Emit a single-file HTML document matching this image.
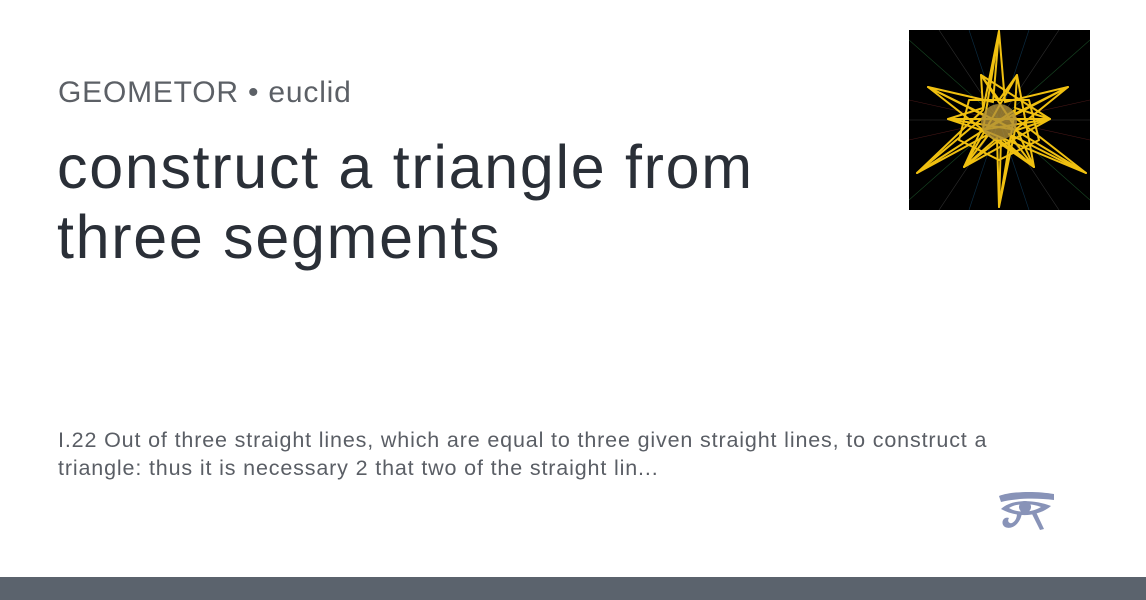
<!DOCTYPE html>
<html><head><meta charset="utf-8"><style>
body{margin:0;width:1146px;height:600px;background:#fff;position:relative;overflow:hidden;font-family:"Liberation Sans",Roboto,sans-serif}
.site{position:absolute;left:58px;top:76px;font-size:30px;color:#5c6066;letter-spacing:0.8px}
h1{position:absolute;left:57px;top:132px;margin:0;font-weight:400;font-size:61px;line-height:70px;color:#2a2f37;letter-spacing:1.7px;white-space:nowrap}
.desc{position:absolute;left:58px;top:426px;font-size:21.5px;line-height:28px;color:#5a5e65;width:945px;letter-spacing:0.85px}
.bar{position:absolute;left:0;top:577px;width:1146px;height:23px;background:#5b636d}
</style></head><body>
<div class="site">GEOMETOR • euclid</div>
<h1>construct a triangle from<br>three segments</h1>
<div class="desc">I.22 Out of three straight lines, which are equal to three given straight lines, to construct a triangle: thus it is necessary 2 that two of the straight lin...</div>
<svg style="position:absolute;left:909px;top:30px" width="181" height="180" viewBox="0 0 181 180">
<rect width="181" height="180" fill="#000"/>
<g stroke-width="0.6" opacity="0.7">
<line x1="0" y1="10" x2="181" y2="170" stroke="#263"/><line x1="181" y1="10" x2="0" y2="170" stroke="#263"/>
<line x1="30" y1="0" x2="150" y2="180" stroke="#444"/><line x1="150" y1="0" x2="30" y2="180" stroke="#444"/>
<line x1="0" y1="70" x2="181" y2="110" stroke="#622"/><line x1="0" y1="110" x2="181" y2="70" stroke="#622"/>
<line x1="0" y1="90" x2="181" y2="90" stroke="#555"/><line x1="60" y1="0" x2="120" y2="180" stroke="#146"/><line x1="120" y1="0" x2="60" y2="180" stroke="#146"/>
</g>
<g fill="none" stroke="#f0c010" stroke-width="2" stroke-linejoin="round">
<polygon points="90,1 96,72 159,57 104,86 177,143 100,104 125,137 92,108 90,177 88,108 55,137 80,104 8,143 76,86 19,57 84,72"/>
<polygon points="72,45 90,70 108,45 106,78 141,89 108,100 125,137 90,110 55,137 72,100 39,89 74,78"/>
<polygon points="90,1 74,80 8,143 106,80 90,177 106,100 159,57 74,100"/>
<polygon points="19,57 106,100 177,143 74,100"/>
<polygon points="72,45 108,100 39,89 141,89 55,137 108,45 125,137 72,100 141,89"/>
<polygon points="60,70 120,70 130,110 90,130 50,110"/>
</g>
<circle cx="90" cy="92" r="18" fill="#b09038" opacity="0.8"/>
</svg>
<svg style="position:absolute;left:997px;top:491px" width="58" height="42" viewBox="0 0 58 42" fill="#8893b8">
<path d="M2,5 C15,0 40,0 57,3 L57,9 C40,7 20,7 4,11 Z"/>
<path d="M4,18 C15,8 36,8 54,15 C41,26 20,27 4,18 Z M12,17 C20,22 34,22 44,16 C34,12 20,12 12,17 Z"/>
<circle cx="28" cy="16" r="6"/>
<path d="M25,22 C23,34 14,39 8,36 C3,33 6,25 12,27 C10,30 12,33 15,32 C19,30 20,26 20,22 Z"/>
<path d="M39,21 L47,38 L43,39 L35,23 Z"/>
</svg>
<div class="bar"></div>
</body></html>
